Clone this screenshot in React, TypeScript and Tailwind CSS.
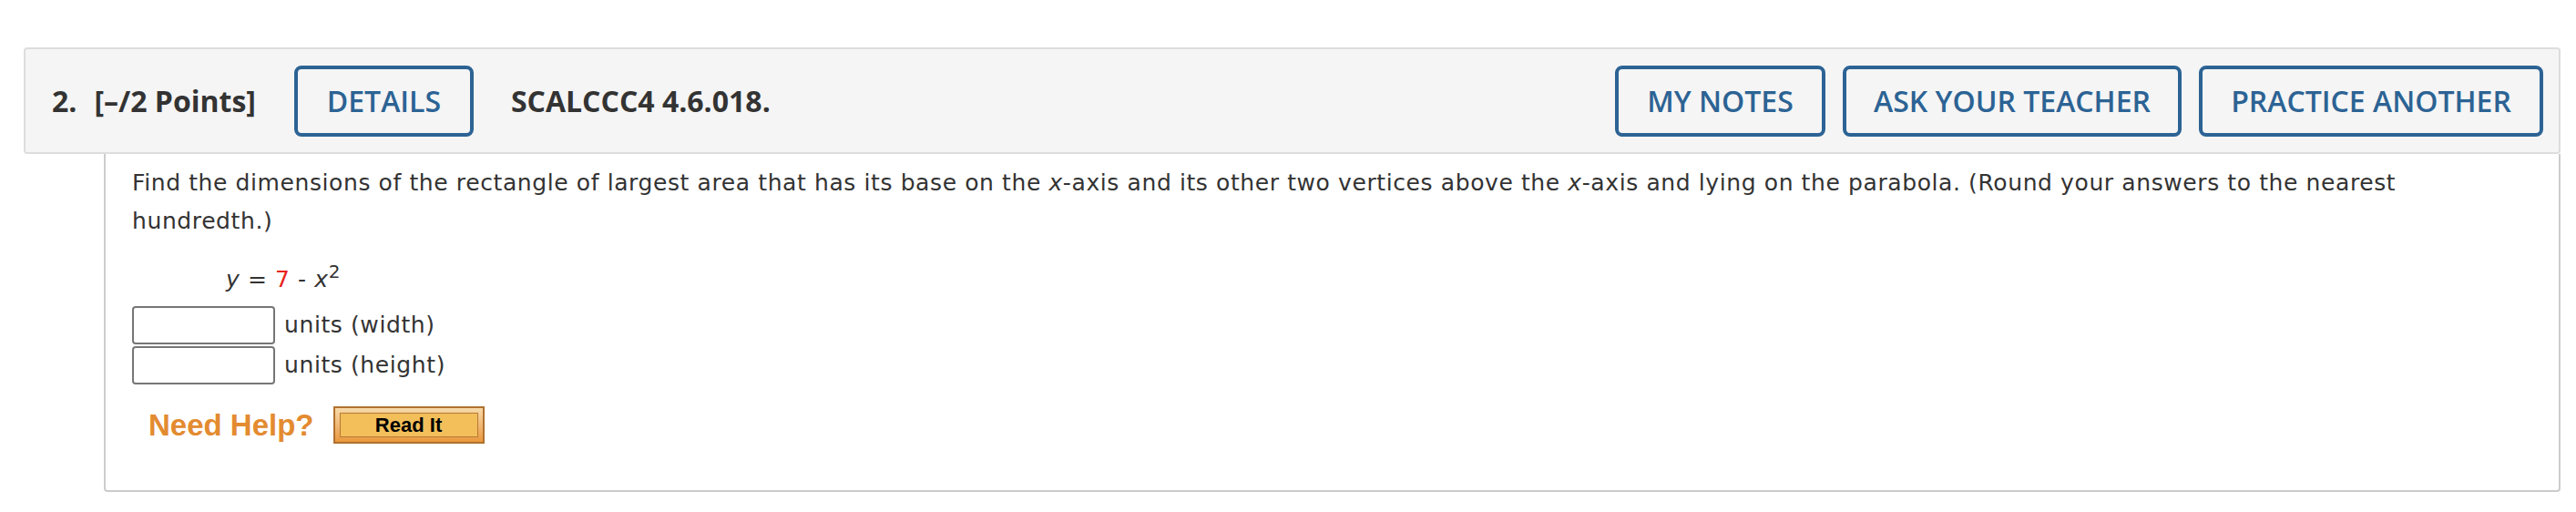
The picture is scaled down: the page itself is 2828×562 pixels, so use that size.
const headerButtons = [
  { label: 'MY NOTES', width: 'w-[231px]' },
  { label: 'ASK YOUR TEACHER', width: 'w-[372px]' },
  { label: 'PRACTICE ANOTHER', width: 'w-[378px]' },
];

function OutlineButton({ label, width }: { label: string; width: string }) {
  return (
    <button
      className={`${width} h-[78px] flex items-center justify-center rounded-[8px] border-4 border-[#2c6394] bg-transparent font-semibold text-[#2c6394]`}
    >
      {label}
    </button>
  );
}

function AnswerRow({ label }: { label: string }) {
  return (
    <div className="flex items-center">
      <input
        type="text"
        className="w-[157px] h-[42px] rounded-[4px] border-2 border-[#767676] bg-white"
      />
      <span className="ml-[10px]">{label}</span>
    </div>
  );
}

export default function App() {
  return (
    <div className="w-[2828px] h-[562px] bg-white pt-[52px] pl-[26px]">
      <div className="w-[2785px]">
        {/* question header */}
        <div className="h-[117px] flex items-center justify-between rounded-[4px] border-2 border-[#dddddd] bg-[#f5f5f5] pl-[29px] pr-[17px] font-['Open_Sans',sans-serif] text-[32px] text-[#333333]">
          <div className="flex items-center">
            <span className="font-bold">2.</span>
            <span className="ml-[19px] font-bold">[–/2 Points]</span>
            <div className="ml-[42px]">
              <OutlineButton label="DETAILS" width="w-[197px]" />
            </div>
            <span className="ml-[41px] font-bold">SCALCCC4 4.6.018.</span>
          </div>
          <div className="flex gap-[19px]">
            {headerButtons.map(b => (
              <OutlineButton key={b.label} label={b.label} width={b.width} />
            ))}
          </div>
        </div>

        {/* question body */}
        <div className="ml-[88px] rounded-b-[4px] border-2 border-t-0 border-[#cccccc] pl-[29px] pr-[40px] pt-[11px] pb-[51px] font-['DejaVu_Sans',Verdana,sans-serif] text-[25px] leading-[42px] tracking-[0.6px] text-[#333333]">
          <p>
            Find the dimensions of the rectangle of largest area that has its base on the <i>x</i>-axis and its other
            two vertices above the <i>x</i>-axis and lying on the parabola. (Round your answers to the nearest
            hundredth.)
          </p>
          <div className="mt-[22px] pl-[103px]">
            <i>y</i> = <span className="text-[#e8231b]">7</span> - <i>x</i>
            <sup className="text-[20px]">2</sup>
          </div>
          <div className="mt-[8px] flex flex-col gap-[2px]">
            <AnswerRow label="units (width)" />
            <AnswerRow label="units (height)" />
          </div>
          <div className="mt-[24px] ml-[18px] flex items-center tracking-normal">
            <span className="font-['Liberation_Sans',Arial,sans-serif] text-[33px] font-bold leading-none text-[#e38b30]">
              Need Help?
            </span>
            <div className="ml-[21px] w-[166px] h-[41px] border-2 border-[#b0712f] bg-gradient-to-b from-[#f7d9a8] to-[#e9983a] p-[5px]">
              <div className="h-full flex items-center justify-center border border-[#b77a33] bg-[#f2bf5b] font-['Liberation_Sans',Arial,sans-serif] text-[22px] font-bold leading-none text-black">
                Read It
              </div>
            </div>
          </div>
        </div>
      </div>
    </div>
  );
}
